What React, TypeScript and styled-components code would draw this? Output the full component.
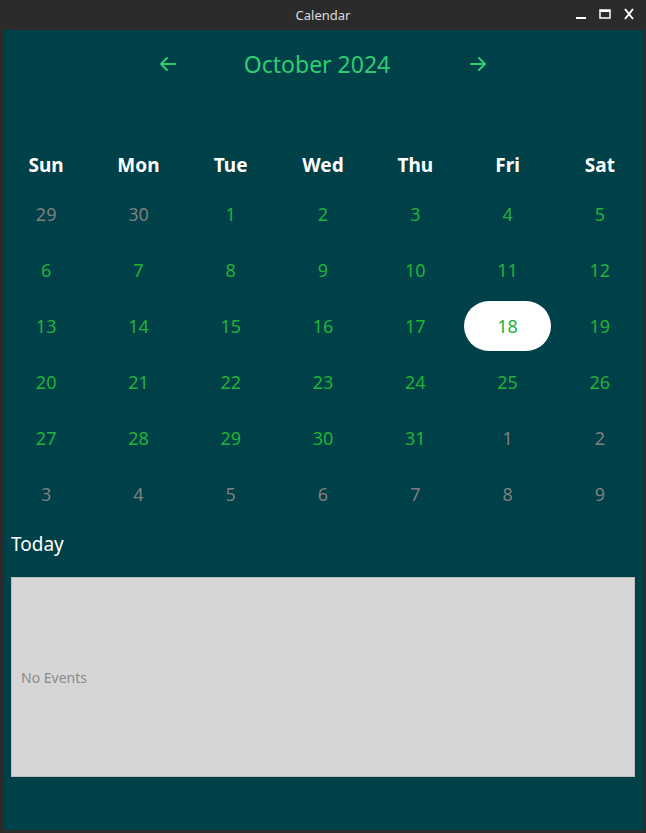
import styled, { createGlobalStyle } from "styled-components";

const GlobalStyle = createGlobalStyle`
  html, body {
    margin: 0;
    padding: 0;
    background: #2b2b2b;
  }
  * { box-sizing: border-box; }
`;

type DayCell = { day: number; inMonth: boolean };

const weekDays = ["Sun", "Mon", "Tue", "Wed", "Thu", "Fri", "Sat"];

function buildMonth(): DayCell[] {
  const cells: DayCell[] = [];
  cells.push({ day: 29, inMonth: false }, { day: 30, inMonth: false });
  for (let d = 1; d <= 31; d++) cells.push({ day: d, inMonth: true });
  for (let d = 1; d <= 9; d++) cells.push({ day: d, inMonth: false });
  return cells;
}

const Window = styled.div`
  width: 646px;
  height: 833px;
  display: flex;
  flex-direction: column;
  font-family: "Noto Sans", "Open Sans", sans-serif;
`;

const TitleBar = styled.div`
  height: 30px;
  flex-shrink: 0;
  background: #2b2b2b;
  position: relative;
  display: flex;
  align-items: center;
  justify-content: center;
  color: #dcdcdc;
  font-size: 13px;
`;

const Controls = styled.div`
  position: absolute;
  right: 10px;
  top: 7px;
  display: flex;
  gap: 10px;
  align-items: center;
`;

const Body = styled.div`
  flex: 1;
  background: #004049;
  box-shadow: inset 3px 0 #2b2b2b, inset -3px 0 #2b2b2b, inset 0 -3px #2b2b2b;
  display: flex;
  flex-direction: column;
`;

const Nav = styled.div`
  height: 68px;
  display: flex;
  align-items: center;
  justify-content: center;
  gap: 48px;
  color: #2ecc71;
  margin-bottom: 45px;
`;

const ArrowButton = styled.button`
  background: none;
  border: none;
  padding: 0;
  width: 20px;
  height: 20px;
  color: #2ecc71;
  display: flex;
  cursor: pointer;
`;

const MonthTitle = styled.div`
  width: 194px;
  padding-right: 12px;
  text-align: center;
  font-size: 23px;
  color: #2ecc71;
`;

const Grid = styled.div`
  display: grid;
  grid-template-columns: repeat(7, 1fr);
  grid-template-rows: 43px;
  grid-auto-rows: 56px;
`;

const HeaderCell = styled.div`
  display: flex;
  align-items: center;
  justify-content: center;
  color: #ffffff;
  font-weight: 700;
  font-size: 19px;
`;

const Day = styled.div<{ $muted: boolean; $selected: boolean }>`
  margin: 3px;
  border-radius: 25px;
  display: flex;
  align-items: center;
  justify-content: center;
  font-size: 18px;
  color: ${(p) => (p.$muted ? "#7f7f7f" : "#22b23a")};
  background: ${(p) => (p.$selected ? "#ffffff" : "transparent")};
`;

const TodayLabel = styled.div`
  color: #ffffff;
  font-size: 19px;
  padding: 9px 11px 0;
  height: 55px;
`;

const Events = styled.div`
  margin: 0 11px;
  height: 200px;
  background: #d6d6d6;
  border: 1px solid #bdbdbd;
  display: flex;
  align-items: center;
  padding-left: 9px;
  color: #8a8a8a;
  font-size: 14px;
`;

const Arrow = ({ dir }: { dir: "left" | "right" }) => (
  <svg width="20" height="20" viewBox="0 0 20 20" fill="none" stroke="currentColor" strokeWidth="2" strokeLinecap="round" strokeLinejoin="round">
    {dir === "left" ? (
      <path d="M17 10H3M9 4l-6 6 6 6" />
    ) : (
      <path d="M3 10h14M11 4l6 6-6 6" />
    )}
  </svg>
);

export default function App() {
  const cells = buildMonth();
  return (
    <Window>
      <GlobalStyle />
      <TitleBar>
        Calendar
        <Controls>
          <svg width="14" height="14" viewBox="0 0 14 14">
            <rect x="2" y="10" width="10" height="2" fill="#fff" />
          </svg>
          <svg width="14" height="14" viewBox="0 0 14 14" fill="none">
            <rect x="2" y="3" width="10" height="8" stroke="#fff" strokeWidth="1.5" />
            <rect x="2" y="3" width="10" height="2" fill="#fff" />
          </svg>
          <svg width="14" height="14" viewBox="0 0 14 14">
            <path d="M3 2l8 10M11 2L3 12" stroke="#fff" strokeWidth="2" />
          </svg>
        </Controls>
      </TitleBar>
      <Body>
        <Nav>
          <ArrowButton>
            <Arrow dir="left" />
          </ArrowButton>
          <MonthTitle>October 2024</MonthTitle>
          <ArrowButton>
            <Arrow dir="right" />
          </ArrowButton>
        </Nav>
        <Grid>
          {weekDays.map((d) => (
            <HeaderCell key={d}>{d}</HeaderCell>
          ))}
          {cells.map((c, i) => (
            <Day key={i} $muted={!c.inMonth} $selected={c.inMonth && c.day === 18}>
              {c.day}
            </Day>
          ))}
        </Grid>
        <TodayLabel>Today</TodayLabel>
        <Events>No Events</Events>
      </Body>
    </Window>
  );
}
